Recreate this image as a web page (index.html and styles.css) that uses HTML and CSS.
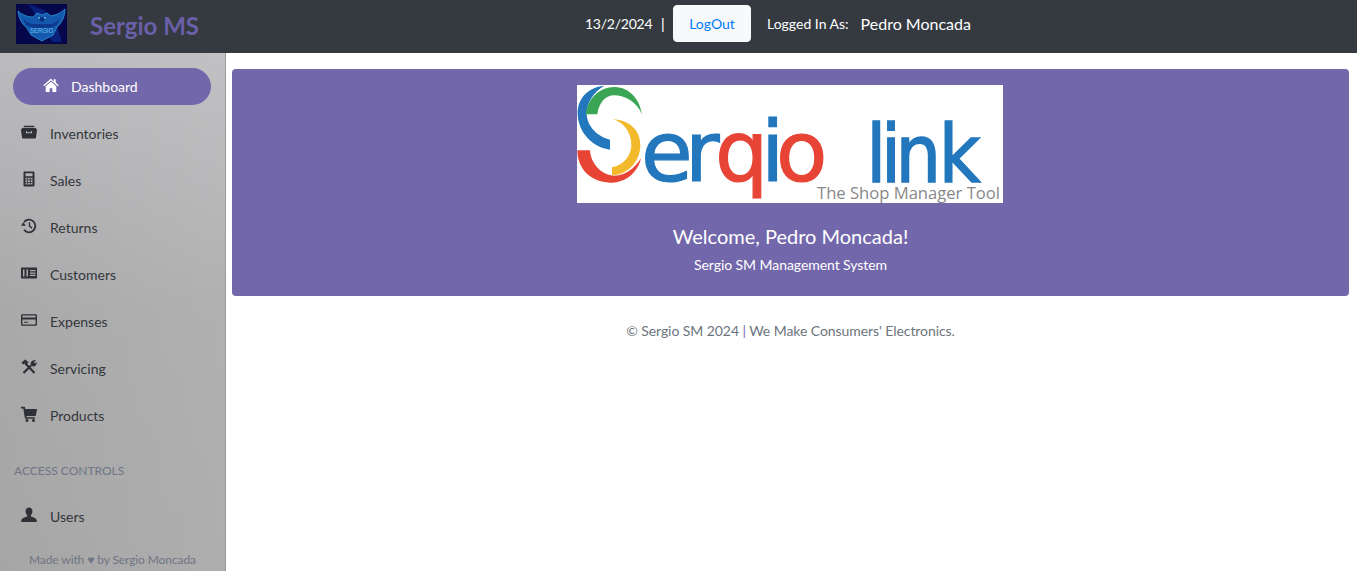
FILE: index.html
```html
<!DOCTYPE html>
<html lang="en">
<head>
<meta charset="utf-8">
<title>Sergio MS</title>
<link rel="stylesheet" href="styles.css">
</head>
<body>
<header class="topbar">
  <div class="brand">
    <svg class="owl" viewBox="0 0 51 40" aria-hidden="true">
      <rect width="51" height="40" fill="#05074a"/>
      <path d="M12 0 L28 6 L40 18 L46 38 L36 38 L26 20Z" fill="#0a1f78"/>
      <path d="M2 7 C3 15 6 20 11 24 L15 31 L26 37 L37 31 L41 23 C46 19 49 12 49 5 C45 9 40 11 35 12 L31 9 L26 11 L21 9 L17 13 C12 13 6 11 2 7Z" fill="#1459ae" stroke="#2a9ad8" stroke-width=".8"/>
      <path d="M7 14 C10 18 14 20 18 20 L34 20 C38 20 42 17 44 13 L41 21 L35 24 L17 24 L10 21Z" fill="#0d3a8e"/>
      <path d="M21 14 L26 18 L31 14 L28 13 L26 14 L24 13Z" fill="#0b2f80"/>
      <circle cx="23" cy="14" r="1" fill="#6fc3ee"/><circle cx="29" cy="14" r="1" fill="#6fc3ee"/>
      <text class="owl-text" x="25.500" y="29" text-anchor="middle" textLength="23" lengthAdjust="spacingAndGlyphs">SERGIO</text>
    </svg>
    <span class="brand-name">Sergio MS</span>
  </div>
  <div class="session">
    <span class="date">13/2/2024</span>
    <span class="pipe">|</span>
    <button class="logout" type="button">LogOut</button>
    <span class="logged">Logged In As:</span>
    <span class="user-name">Pedro Moncada</span>
  </div>
</header>
<div class="shell">
  <aside class="sidebar">
    <nav class="nav">
      <a class="nav-item active"><svg class="ico" viewBox="0 0 16 16"><path d="M8 1.500 .3 8.300l.9 1L8 3.500l6.800 5.800.9-1-3-2.700V2.300h-2v2.400ZM2.700 9.200V15h3.900v-3.700h2.800V15h3.900V9.200L8 4.700Z"/></svg><span>Dashboard</span></a>
      <a class="nav-item"><svg class="ico" viewBox="0 0 16 16"><path d="M3 1.800h10l.6 1.400H2.400ZM1.500 4h13L16 5.500 15 13.500q-.1 1-1.200 1H2.200q-1.100 0-1.200-1L0 5.500ZM5 7v2.300h6V7h-1v1.200H6V7Z" fill-rule="evenodd"/></svg><span>Inventories</span></a>
      <a class="nav-item"><svg class="ico" viewBox="0 0 16 16"><path d="M3.500 .5h9q1 0 1 1v13q0 1-1 1h-9q-1 0-1-1v-13q0-1 1-1ZM4.500 2.300v3h7v-3ZM4.500 6.800V8.500h1.800V6.800ZM7.100 6.800V8.500h1.800V6.800ZM9.700 6.800V8.500h1.800V6.800ZM4.500 9.300V11h1.800V9.300ZM7.100 9.300V11h1.800V9.300ZM9.700 9.300V11h1.800V9.300ZM4.500 11.800v1.700h1.800v-1.700ZM7.100 11.800v1.700h1.800v-1.700ZM9.700 11.800v1.700h1.800v-1.700Z" fill-rule="evenodd"/></svg><span>Sales</span></a>
      <a class="nav-item"><svg class="ico" viewBox="0 0 16 16"><path class="ico-line" d="M3 4.200A6.300 6.300 0 1 1 3 11.800"/><path d="M0 7.800h4.800L2.400 4.200ZM7.800 4.200h1.400v3.500l2.400 2-.9 1.100-2.900-2.400Z"/></svg><span>Returns</span></a>
      <a class="nav-item"><svg class="ico" viewBox="0 0 16 16"><path d="M.8 2.500h14.400q.8 0 .8.8v9.400q0 .8-.8.8H.8q-.8 0-.8-.8V3.300q0-.8.8-.8ZM2 4.500v7h1.500v-7ZM5.500 4.500v7H7v-7ZM9 5v1.300h5.500V5ZM9 7.400v1.300h5.500V7.400ZM9 9.800v1.300h5.500V9.800Z" fill-rule="evenodd"/></svg><span>Customers</span></a>
      <a class="nav-item"><svg class="ico" viewBox="0 0 16 16"><path d="M1.300 2.200h13.400q1.300 0 1.300 1.300v9q0 1.300-1.300 1.300H1.300Q0 13.800 0 12.500v-9Q0 2.200 1.300 2.200ZM1.400 3.600V5.400h13.200V3.600ZM1.400 7.600v4.800h13.200V7.600ZM3 9.800h4v1H3Z" fill-rule="evenodd"/></svg><span>Expenses</span></a>
      <a class="nav-item"><svg class="ico" viewBox="0 0 16 16"><path class="ico-tool" d="M2.500 14 10 6.500M13.500 14 4.500 4.500"/><path d="M.5 3.500 4 .5 7.500 3 5 6.500 3.500 4.500 2 5.500ZM10 6.500 9.500 4Q10.500 1 15 1L13 3.200 14 4.500 16 3Q15.500 7.500 12 7.500Z"/></svg><span>Servicing</span></a>
      <a class="nav-item"><svg class="ico" viewBox="0 0 16 16"><path d="M0 .8h3.200q.7 0 .8.6L4.300 3H15.600q.4 0 .4.6l-1.200 6q-.1.5-.7.5H5.500l.2 1.200H14v1.500H4.600q-.6 0-.7-.5L2.300 2.400H0ZM6 13a1.500 1.500 0 1 1-.01 0ZM12.500 13a1.500 1.500 0 1 1-.01 0Z"/></svg><span>Products</span></a>
    </nav>
    <h6 class="nav-heading">ACCESS CONTROLS</h6>
    <a class="nav-item users"><svg class="ico" viewBox="0 0 16 16"><path d="M8 .5c2.200 0 3.400 1.700 3.400 3.800 0 1.500-.6 3-1.500 3.800v1.400c2 .8 5 1.400 5.600 3.200l.5 2.300H0l.5-2.300c.6-1.800 3.600-2.400 5.600-3.200V8.100C5.200 7.300 4.600 5.800 4.600 4.300 4.600 2.200 5.800.5 8 .5Z"/></svg><span>Users</span></a>
    <p class="made">Made with ♥ by Sergio Moncada</p>
  </aside>
  <main class="content">
    <section class="hero">
      <svg class="logo" viewBox="0 0 426 118" role="img" aria-label="Sergio link logo">
        <rect width="426" height="118" fill="#fff"/>
        <g transform="scale(.3333) translate(-21 -15)">
          <path fill="#2277bd" d="M103 17C50 22 21 60 23 103c2 55 45 100 97 106v-30C85 172 50 140 50 100c0-32 22-65 53-83Z"/>
          <path fill="#3aa655" d="M48 103C52 55 90 20 135 21c42 1 74 35 81 82C200 65 165 46 132 46c-26 0-46 24-50 57Z"/>
          <path fill="#f2b92b" d="M128 118c50 2 82 32 83 76 1 50-38 90-85 92v-24c34-6 58-34 58-68 0-38-24-68-56-76Z"/>
          <path fill="#e74435" d="M22 211h38c2 38 32 73 70 76 34 2 62-20 83-52-10 45-50 75-92 73C60 306 22 265 22 211Z"/>
        </g>
        <text class="logo-word" y="96" x="64 108 138 184 199"><tspan class="logo-blue">er</tspan><tspan class="logo-red">q</tspan><tspan class="logo-blue">i</tspan><tspan class="logo-red">o</tspan></text>
        <text class="logo-word logo-link logo-blue" transform="translate(296 97) scale(.9 1)" y="0" x="-7.500 9 25 73">link</text>
        <text class="logo-tag" x="240" y="113.500" textLength="183" lengthAdjust="spacingAndGlyphs">The Shop Manager Tool</text>
      </svg>
      <h1 class="welcome">Welcome, Pedro Moncada!</h1>
      <p class="system">Sergio SM Management System</p>
    </section>
    <footer class="foot">© Sergio SM 2024 <span class="foot-sep">|</span> We Make Consumers' Electronics.</footer>
  </main>
</div>
</body>
</html>
```
FILE: styles.css
```css
* { box-sizing: border-box; }
html, body { margin: 0; height: 100%; overflow: hidden; }
body { font-family: Lato, "Open Sans", sans-serif; font-size: 14px; color: #333; background: #fff; display: flex; flex-direction: column; }

.topbar { height: 53px; flex: none; background: #343a40; display: flex; align-items: center; color: #fff; padding-bottom: 6px; }
.brand { width: 585px; flex: none; display: flex; align-items: center; padding-left: 16px; gap: 23px; }
.owl { width: 51px; height: 40px; display: block; }
.owl-text { font-family: "Liberation Sans", sans-serif; font-size: 7px; fill: #6fc3ee; }
.brand-name { font-size: 24px; font-weight: 700; color: #6a5fa8; margin-top: 3px; }
.session { display: flex; align-items: center; }
.date { width: 67px; font-size: 14px; letter-spacing: -.25px; white-space: nowrap; }
.pipe { margin-left: 9px; width: 3px; font-size: 14px; font-family: "Liberation Sans", sans-serif; }
.logout { margin-left: 9px; width: 78px; height: 37px; border: 1px solid #f8f9fa; border-radius: 4px; background: #f8f9fa; color: #007bff; font: 14px Lato, sans-serif; padding: 0; }
.logged { margin-left: 16px; font-size: 14px; }
.user-name { margin-left: 12px; font-size: 16px; }

.shell { flex: 1; display: flex; min-height: 0; }
.sidebar { width: 226px; flex: none; padding: 15px 14px 0 13px; border-right: 1px solid #9a9a9a; background: linear-gradient(90deg, rgba(255,255,255,0), rgba(255,255,255,.09)), linear-gradient(180deg, #bbbbbe 0%, #a9a9aa 50%, #a6a6a6 100%); display: flex; flex-direction: column; }
.nav { display: flex; flex-direction: column; gap: 10px; }
.nav-item { height: 37px; display: flex; align-items: center; padding-left: 8px; gap: 13px; color: #33373d; }
.nav-item.active { background: #7367ab; border-radius: 19px; color: #fff; padding-left: 30px; gap: 12px; }
.ico { width: 16px; height: 16px; flex: none; fill: #2f3136; margin-top: -4px; }
.nav-item.active .ico { fill: #fff; }
.ico-line { fill: none; stroke: #2f3136; stroke-width: 1.800; }
.ico-tool { fill: none; stroke: #2f3136; stroke-width: 2.200; }
.nav-heading { margin: 29px 0 0 1px; font-size: 12px; font-weight: 400; line-height: 16px; color: #6f7583; }
.users { margin-top: 19px; }
.made { margin: 17px 0 0 16px; font-size: 12px; line-height: 16px; white-space: nowrap; letter-spacing: -.1px; color: #6f7583; }

.content { flex: 1; min-width: 0; padding: 16px 8px 0 6px; }
.hero { height: 227px; background: #7367ab; border-radius: 4px; padding-top: 16px; color: #fff; display: flex; flex-direction: column; align-items: center; }
.logo { width: 426px; height: 118px; display: block; flex: none; margin-right: 1px; }
.logo-word { font-family: "DejaVu Sans", sans-serif; font-size: 84px; stroke-width: 1.200px; }
.logo-link { font-size: 80px; stroke-width: 1.600px; }
.logo-blue { fill: #2277bd; stroke: #2277bd; }
.logo-red { fill: #e74435; stroke: #e74435; }
.logo-tag { font-family: "Open Sans", sans-serif; font-size: 17px; font-weight: 400; fill: #888; }
.welcome { margin: 21px 0 0; font-size: 20px; line-height: 24px; font-weight: 400; }
.system { margin: 6px 0 0; font-size: 14px; line-height: 22px; letter-spacing: -.07px; }
.foot { margin-top: 25px; text-align: center; font-size: 14px; line-height: 20px; letter-spacing: -.07px; color: #6c757d; }
.foot-sep { color: #7367ab; }
```
